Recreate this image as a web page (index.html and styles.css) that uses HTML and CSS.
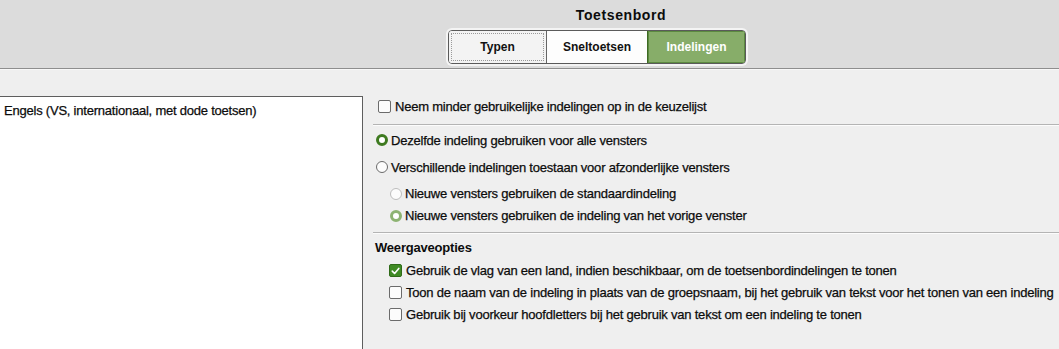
FILE: index.html
```html
<!DOCTYPE html>
<html lang="nl">
<head>
<meta charset="utf-8">
<title>Toetsenbord</title>
<link rel="stylesheet" href="styles.css">
</head>
<body>
<div class="header">
  <div class="title">Toetsenbord</div>
  <div class="tabs">
    <div class="tab tab-focus"><span class="focus-ring">Typen</span></div>
    <div class="tab">Sneltoetsen</div>
    <div class="tab tab-active">Indelingen</div>
  </div>
</div>
<div class="main">
  <div class="list">
    <div class="list-item">Engels (VS, internationaal, met dode toetsen)</div>
  </div>
  <div class="panel">
    <div class="row row-top"><span class="check"></span><span class="label l-check">Neem minder gebruikelijke indelingen op in de keuzelijst</span></div>
    <div class="sep"></div>
    <div class="row row-radio1"><span class="radio radio-on"></span><span class="label l-radio">Dezelfde indeling gebruiken voor alle vensters</span></div>
    <div class="row row-radio2"><span class="radio"></span><span class="label l-radio">Verschillende indelingen toestaan voor afzonderlijke vensters</span></div>
    <div class="row row-sub1 indent"><span class="radio radio-dis"></span><span class="label l-sub">Nieuwe vensters gebruiken de standaardindeling</span></div>
    <div class="row row-sub2 indent"><span class="radio radio-dis-on"></span><span class="label l-sub">Nieuwe vensters gebruiken de indeling van het vorige venster</span></div>
    <div class="sep sep2"></div>
    <div class="section-title">Weergaveopties</div>
    <div class="row row-opt1 indent2"><span class="check check-on"><svg viewBox="0 0 12 12" width="12" height="12"><path d="M2.5 6.2 L5 8.7 L9.6 3.2" fill="none" stroke="#fff" stroke-width="1.8" stroke-linecap="round" stroke-linejoin="round"/></svg></span><span class="label l-opt">Gebruik de vlag van een land, indien beschikbaar, om de toetsenbordindelingen te tonen</span></div>
    <div class="row row-opt indent2"><span class="check"></span><span class="label l-opt">Toon de naam van de indeling in plaats van de groepsnaam, bij het gebruik van tekst voor het tonen van een indeling</span></div>
    <div class="row row-opt indent2"><span class="check"></span><span class="label l-opt">Gebruik bij voorkeur hoofdletters bij het gebruik van tekst om een indeling te tonen</span></div>
  </div>
</div>
</body>
</html>
```

FILE: styles.css
```css
* { box-sizing: border-box; }
html, body { margin: 0; padding: 0; }
body {
  width: 1059px;
  height: 349px;
  overflow: hidden;
  background: #efefef;
  font-family: "Liberation Sans", Arial, sans-serif;
  font-size: 13px;
  color: #0c0c0c;
  letter-spacing: -0.22px;
  -webkit-text-stroke: 0.25px #0c0c0c;
}
.header {
  height: 69px;
  background: #dcdcdc;
  border-bottom: 1px solid #8e8e8e;
  box-shadow: 0 1px 0 #f8f8f8;
  display: flex;
  flex-direction: column;
  align-items: center;
  padding-left: 135px;
  padding-top: 6px;
}
.title {
  font-weight: bold;
  font-size: 14px;
  margin-left: 48px;
  height: 18px;
  line-height: 18px;
  letter-spacing: 0.6px;
  -webkit-text-stroke: 0;
}
.tabs {
  margin-top: 6px;
  display: flex;
  height: 34px;
  border: 1px solid #5a5a5a;
  border-radius: 4px;
  box-shadow: 0 0 0 2px #f4f4f4;
  overflow: hidden;
  background: #fbfbfb;
}
.tab {
  display: flex;
  align-items: center;
  justify-content: center;
  font-weight: bold;
  font-size: 12px;
  letter-spacing: 0;
  color: #111;
  -webkit-text-stroke: 0;
}
.tab-focus { width: 98px; padding: 2px; border-right: 1px solid #666; background: #f3f3f3; }
.focus-ring {
  width: 100%;
  height: 100%;
  border: 1px dotted #9a9a9a;
  display: flex;
  align-items: center;
  justify-content: center;
}
.tab + .tab { width: 100px; background: #fdfdfd; }
.tab.tab-active {
  width: 98px;
  background: #87ad69;
  color: #fff;
  border-left: 1px solid #3d6a22;
  box-shadow: inset 0 0 0 1px #5c8a40;
}
.main {
  display: flex;
  padding-top: 27px;
  height: 280px;
}
.list {
  width: 363px;
  flex: none;
  background: #fff;
  border: 1px solid #5e5e5e;
  border-left: none;
  border-bottom: none;
  padding: 5px 4px;
}
.list-item { line-height: 18px; }
.panel {
  flex: 1;
  padding-left: 12px;
  display: flex;
  flex-direction: column;
}
.row { display: flex; align-items: center; flex: none; }
.row-top { height: 21px; padding-left: 3px; }
.row-radio1 { height: 28px; padding-left: 1px; }
.row-radio2 { height: 26px; padding-left: 1px; }
.row-sub1 { height: 27px; }
.row-sub2 { height: 17px; }
.row-opt1 { height: 21px; }
.row-opt { height: 22px; }
.indent { padding-left: 15px; }
.indent2 { padding-left: 14px; }
.sep {
  height: 2px;
  flex: none;
  border-top: 1px solid #b4b4b4;
  border-bottom: 1px solid #fcfcfc;
  margin-top: 7px;
  margin-left: -2px;
}
.sep2 { margin-top: 8px; }
.section-title {
  height: 26px;
  flex: none;
  display: flex;
  align-items: center;
  font-weight: bold;
  letter-spacing: -0.2px;
  -webkit-text-stroke: 0;
}
.check {
  width: 13px;
  height: 13px;
  flex: none;
  border: 1px solid #6b6b6b;
  border-radius: 2px;
  background: #fcfcfc;
  display: flex;
  align-items: center;
  justify-content: center;
  -webkit-text-stroke: 0;
}
.check-on { background: #3f8a24; border-color: #2f6a18; }
.radio {
  width: 12px;
  height: 12px;
  flex: none;
  border-radius: 50%;
  border: 1px solid #6b6b6b;
  background: #fcfcfc;
}
.radio-on { border: 3px solid #3e7a20; background: #fff; }
.radio-dis { border-color: #bdbdbd; }
.radio-dis-on { border: 3px solid #8db372; background: #fff; }
.label { white-space: nowrap; }
.l-check { margin-left: 4px; }
.l-radio { margin-left: 3px; }
.l-sub { margin-left: 3px; }
.l-opt { margin-left: 4px; }
```
